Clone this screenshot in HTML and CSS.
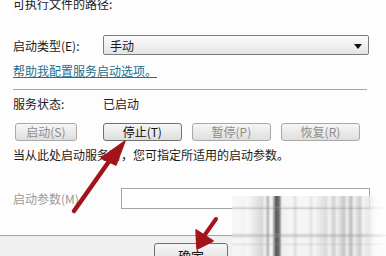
FILE: index.html
```html
<!DOCTYPE html>
<html lang="zh-CN">
<head>
  <meta charset="UTF-8">
  <title>服务属性</title>
  <link rel="stylesheet" href="styles.css">
</head>
<body>
  <div class="pane">
    <div class="path-label">可执行文件的路径:</div>

    <div class="field-row type-row">
      <span class="field-label">启动类型(E):</span>
      <div class="select">
        <span>手动</span>
        <span class="caret"></span>
      </div>
    </div>

    <div class="help-row"><a class="help-link" href="#">帮助我配置服务启动选项。</a></div>

    <div class="divider"></div>

    <div class="field-row status-row">
      <span class="field-label">服务状态:</span>
      <span>已启动</span>
    </div>

    <div class="btn-row">
      <button class="btn btn-start" disabled>启动(S)</button>
      <button class="btn btn-stop">停止(T)</button>
      <button class="btn" disabled>暂停(P)</button>
      <button class="btn" disabled>恢复(R)</button>
    </div>

    <div class="note">当从此处启动服务时，您可指定所适用的启动参数。</div>

    <div class="field-row param-row">
      <span class="field-label muted">启动参数(M)</span>
      <div class="param-input"></div>
    </div>
  </div>

  <div class="footer">
    <button class="btn btn-ok">确定</button>
  </div>

  <!-- watermark smear in the bottom right corner -->
  <div class="watermark"></div>

  <!-- red annotation arrows -->
  <svg class="arrows" width="386" height="256" viewBox="0 0 386 256">
    <g fill="#a3141a" stroke="#a3141a" stroke-linejoin="round">
      <line x1="74" y1="211" x2="110" y2="160" stroke-width="4.5" stroke-linecap="round"/>
      <polygon points="125,141 101,158 116,165" stroke-width="1.5"/>
      <line x1="216" y1="219" x2="204" y2="236" stroke-width="4" stroke-linecap="round"/>
      <polygon points="197,249 196,230 213,241" stroke-width="1.5"/>
    </g>
  </svg>
</body>
</html>
```

FILE: styles.css
```css
body {
  margin: 0;
  width: 386px;
  height: 256px;
  overflow: hidden;
  position: relative;
  background-color: #fdfdfd;
  font-family: "Noto Sans CJK SC", "Liberation Sans", sans-serif;
  font-size: 12px;
  color: #1a1a1a;
}
.pane {
  padding: 0 16px 0 13px;
}
.path-label {
  height: 16px;
  line-height: 16px;
  margin-top: -4px;
}
.field-row {
  display: flex;
  align-items: center;
}
.field-label {
  width: 90px;
  flex: none;
}
.muted {
  color: #9a9a9a;
}
.type-row {
  margin-top: 23px;
  height: 20px;
}
.select {
  height: 18px;
  border: 1px solid #7d7d7d;
  border-radius: 2px;
  background: linear-gradient(#fbfbfb, #e4e4e4);
  display: flex;
  align-items: center;
  justify-content: space-between;
  padding: 0 6px 0 6px;
  width: 252px;
}
.caret {
  width: 0;
  height: 0;
  border-left: 4px solid transparent;
  border-right: 4px solid transparent;
  border-top: 5px solid #111;
  margin-top: 2px;
}
.help-row {
  margin-top: 8px;
  height: 16px;
  line-height: 16px;
}
.help-link {
  color: #1b6f91;
  text-decoration: underline;
}
.divider {
  margin-top: 10px;
  width: 354px;
  height: 1px;
  background-color: #a8a8a8;
}
.status-row {
  margin-top: 5px;
  height: 16px;
}
.btn-row {
  display: flex;
  margin-top: 12px;
  padding-left: 2px;
}
.btn {
  height: 18px;
  width: 82px;
  margin-right: 10px;
  padding: 0;
  font-family: inherit;
  font-size: 12px;
  line-height: 16px;
  color: #8c8c8c;
  border: 1px solid #a9a9a9;
  border-radius: 3px;
  background: linear-gradient(#f6f6f6, #dedede);
}
.btn-start {
  width: 64px;
  margin-right: 26px;
}
.btn-stop {
  color: #111;
  border-color: #707070;
}
.note {
  margin-top: 6px;
  height: 16px;
  line-height: 16px;
}
.param-row {
  margin-top: 25px;
  height: 20px;
}
.param-row .field-label {
  width: 108px;
}
.param-input {
  width: 248px;
  height: 19px;
  border: 1px solid #a4a4a4;
  background-color: #fff;
}
.footer {
  position: absolute;
  left: 0;
  right: 0;
  top: 235px;
  bottom: 0;
  border-top: 1px solid #a4a4a4;
  background-color: #f0f0f0;
  padding: 7px 0 0 154px;
}
.btn-ok {
  width: 74px;
  height: 22px;
  color: #111;
  border-color: #707070;
  font-size: 13px;
  line-height: 18px;
  padding-top: 3px;
  margin: 0;
}
.watermark {
  position: absolute;
  left: 232px;
  top: 196px;
  width: 154px;
  height: 60px;
  opacity: 0.85;
  background:
    linear-gradient(to right, rgba(255,255,255,0) 85%, rgba(255,255,255,0.9)),
    linear-gradient(rgba(0,0,0,0) 10px, rgba(150,150,150,0.25) 11px, rgba(150,150,150,0.25) 13px, rgba(0,0,0,0) 14px,
      rgba(0,0,0,0) 37px, rgba(150,150,150,0.3) 38px, rgba(150,150,150,0.3) 41px, rgba(0,0,0,0) 42px,
      rgba(0,0,0,0) 47px, rgba(150,150,150,0.25) 48px, rgba(0,0,0,0) 50px),
    linear-gradient(to right,
      #f8f8f8 0px, #f3f3f3 12px, #f7f7f7 16px,
      #d2d2d2 30px, #f0f0f0 33px, #a8a8a8 36px, #eeeeee 38px,
      #f4f4f4 40px, #3a3a3a 44px, #5a5a5a 47px, #efefef 50px,
      #f6f6f6 60px, #dcdcdc 63px, #f5f5f5 66px,
      #f5f5f5 76px, #e0e0e0 79px, #f6f6f6 82px,
      #d6d6d6 94px, #f2f2f2 97px, #cacaca 102px, #efefef 105px,
      #bebebe 112px, #ededed 115px, #b2b2b2 119px, #eeeeee 122px,
      #c6c6c6 128px, #f2f2f2 131px, #e0e0e0 137px, #f8f8f8 142px, #ffffff 154px);
}
.arrows {
  position: absolute;
  left: 0;
  top: 0;
}
```
